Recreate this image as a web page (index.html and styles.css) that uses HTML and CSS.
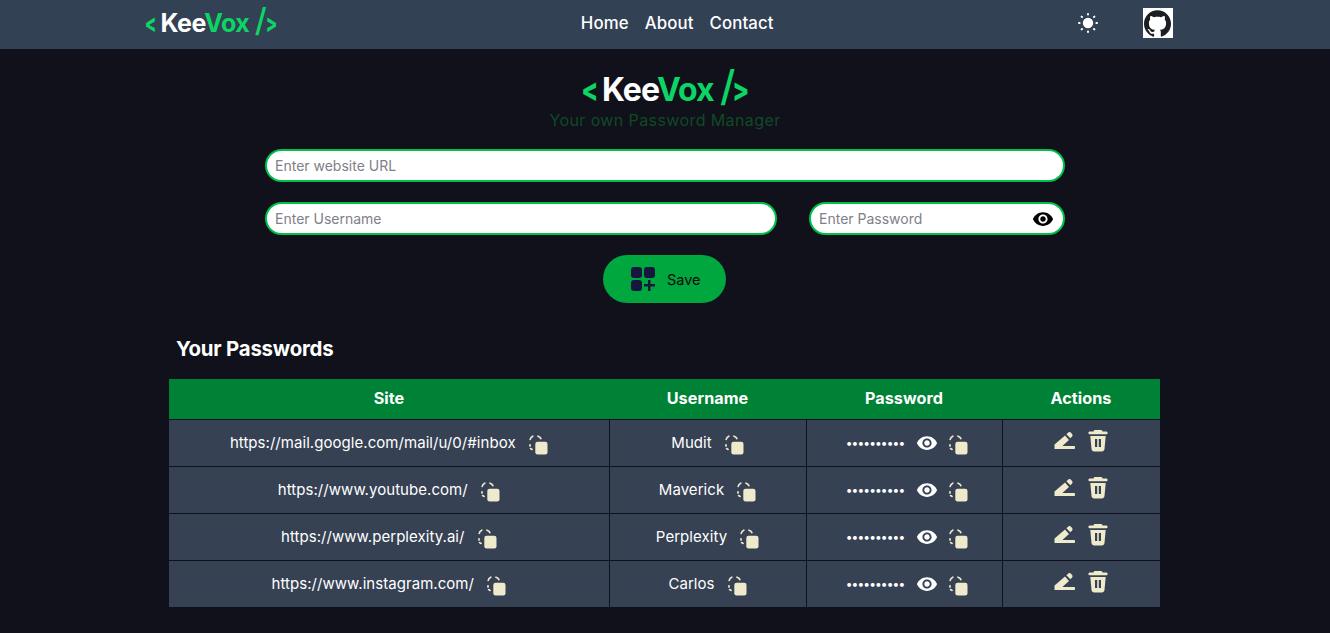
FILE: index.html
```html
<!DOCTYPE html>
<html lang="en">
<head>
<meta charset="utf-8">
<title>KeeVox</title>
<link rel="stylesheet" href="styles.css">
</head>
<body>
<svg class="defs" aria-hidden="true">
  <symbol id="eye" viewBox="0 0 24 24"><path fill-rule="evenodd" d="M12 4.500C7 4.500 2.730 7.610 1 12c1.730 4.390 6 7.500 11 7.500s9.270-3.110 11-7.500c-1.730-4.390-6-7.500-11-7.500zM12 17c-2.760 0-5-2.240-5-5s2.240-5 5-5 5 2.240 5 5-2.240 5-5 5zm0-8c-1.660 0-3 1.340-3 3s1.340 3 3 3 3-1.340 3-3-1.340-3-3-3z"/></symbol>
  <symbol id="copy" viewBox="0 0 19 20"><rect x="6.300" y="6.800" width="12.200" height="12.700" rx="2.300" fill="#eeeacb"/><path d="M1.200 4.400C1.500 3 2.400 1.800 3.800 1.200M9 1.200c1.300.4 2.300 1.200 2.900 2.400M1 9.800v1.200M1.600 13.600l1.500.8" fill="none" stroke="#eeeacb" stroke-width="1.700" stroke-linecap="round"/></symbol>
  <symbol id="edit" viewBox="0 0 22 20"><path fill="#eeeacb" d="M0.500 13.600 11 4.500l4 4.400-6.600 6H16L16.700 18H.5zM12.400 3.200l1.900-1.700c.8-.7 2-.6 2.700.2l1.100 1.300c.7.8.6 2-.2 2.700l-1.600 1.600z"/><path fill="#eeeacb" d="M8 15h12.200c.6 0 .8.4.8.9v1.200c0 .5-.3.9-.8.9H6z"/></symbol>
  <symbol id="trash" viewBox="0 0 20 22"><path fill="#eeeacb" fill-rule="evenodd" d="M7 0h6c.8 0 1.400.6 1.500 1.500H18c1 0 1.600.6 1.600 1.400s-.6 1.400-1.600 1.400H2C1 4.300.4 3.700.4 2.900S1 1.500 2 1.500h3.500C5.600.6 6.200 0 7 0zM2.300 6h15.400l-1.200 13c-.2 1.500-1.200 2.500-2.700 2.500H6.200c-1.500 0-2.500-1-2.700-2.500zM7 9v8h2.200V9zm3.800 0v8H13V9z"/></symbol>
</svg>

<nav class="nav">
  <a class="logo logo-small" href="#"><span class="green chev">&lt;</span> <span>Kee</span><span class="green">Vox</span> <span class="green slash">/</span><span class="green chev">&gt;</span></a>
  <ul class="links">
    <li><a href="#">Home</a></li>
    <li><a href="#">About</a></li>
    <li><a href="#">Contact</a></li>
  </ul>
  <div class="nav-right">
    <svg class="sun" viewBox="0 0 20 20"><circle cx="10" cy="10" r="5.200" fill="#fff"/><g stroke="#fff" stroke-width="2" stroke-linecap="round"><path d="M10 1v.6M10 18.400v.6M1 10h.6M18.400 10h.6M3.600 3.600l.4.4M16 16l.4.4M3.600 16.400l.4-.4M16 4l.4-.4"/></g></svg>
    <a class="gh" href="#"><svg viewBox="0 0 24 24"><path fill="#1b1f23" d="M12 .297c-6.630 0-12 5.373-12 12 0 5.303 3.438 9.800 8.205 11.385.6.113.82-.258.82-.577 0-.285-.01-1.040-.015-2.040-3.338.724-4.042-1.610-4.042-1.610C4.422 18.070 3.633 17.700 3.633 17.700c-1.087-.744.084-.729.084-.729 1.205.084 1.838 1.236 1.838 1.236 1.070 1.835 2.809 1.305 3.495.998.108-.776.417-1.305.76-1.605-2.665-.3-5.466-1.332-5.466-5.930 0-1.310.465-2.380 1.235-3.220-.135-.303-.54-1.523.105-3.176 0 0 1.005-.322 3.300 1.230.96-.267 1.980-.399 3-.405 1.020.006 2.040.138 3 .405 2.280-1.552 3.285-1.230 3.285-1.230.645 1.653.24 2.873.12 3.176.765.84 1.230 1.910 1.230 3.220 0 4.610-2.805 5.625-5.475 5.920.42.36.81 1.096.81 2.220 0 1.606-.015 2.896-.015 3.286 0 .315.21.69.825.57C20.565 22.092 24 17.592 24 12.297c0-6.627-5.373-12-12-12"/></svg></a>
  </div>
</nav>

<main class="main">
  <h1 class="logo logo-big"><span class="green chev">&lt;</span> <span>Kee</span><span class="green">Vox</span> <span class="green slash">/</span><span class="green chev">&gt;</span></h1>
  <p class="tagline">Your own Password Manager</p>

  <form class="form">
    <input class="field" type="text" placeholder="Enter website URL">
    <div class="form-row">
      <input class="field user" type="text" placeholder="Enter Username">
      <div class="pass">
        <input class="field" type="password" placeholder="Enter Password">
        <svg class="pass-eye"><use href="#eye"/></svg>
      </div>
    </div>
    <button class="save" type="button">
      <svg class="save-icon" viewBox="0 0 24 24" fill="#16163f"><rect x="0" y="0" width="11" height="11" rx="3"/><rect x="13" y="0" width="11" height="11" rx="3"/><rect x="0" y="13" width="11" height="11" rx="3"/><path d="M17 13h2.500v4H24v2.500h-4.500V24H17v-4.500h-4V17h4z"/></svg>
      Save
    </button>
  </form>

  <section class="list">
    <h2 class="list-title">Your Passwords</h2>
    <table class="table">
      <colgroup><col class="c1"><col class="c2"><col class="c3"><col class="c4"></colgroup>
      <thead><tr><th>Site</th><th>Username</th><th>Password</th><th>Actions</th></tr></thead>
      <tbody>
        <tr>
          <td><div class="cell"><span>https://mail.google.com/mail/u/0/#inbox</span><svg class="copy"><use href="#copy"/></svg></div></td>
          <td><div class="cell"><span>Mudit</span><svg class="copy"><use href="#copy"/></svg></div></td>
          <td><div class="cell pw"><span class="dots">••••••••••</span><svg class="eye"><use href="#eye"/></svg><svg class="copy"><use href="#copy"/></svg></div></td>
          <td><div class="cell acts"><svg class="edit"><use href="#edit"/></svg><svg class="trash"><use href="#trash"/></svg></div></td>
        </tr>
        <tr>
          <td><div class="cell"><span>https://www.youtube.com/</span><svg class="copy"><use href="#copy"/></svg></div></td>
          <td><div class="cell"><span>Maverick</span><svg class="copy"><use href="#copy"/></svg></div></td>
          <td><div class="cell pw"><span class="dots">••••••••••</span><svg class="eye"><use href="#eye"/></svg><svg class="copy"><use href="#copy"/></svg></div></td>
          <td><div class="cell acts"><svg class="edit"><use href="#edit"/></svg><svg class="trash"><use href="#trash"/></svg></div></td>
        </tr>
        <tr>
          <td><div class="cell"><span>https://www.perplexity.ai/</span><svg class="copy"><use href="#copy"/></svg></div></td>
          <td><div class="cell"><span>Perplexity</span><svg class="copy"><use href="#copy"/></svg></div></td>
          <td><div class="cell pw"><span class="dots">••••••••••</span><svg class="eye"><use href="#eye"/></svg><svg class="copy"><use href="#copy"/></svg></div></td>
          <td><div class="cell acts"><svg class="edit"><use href="#edit"/></svg><svg class="trash"><use href="#trash"/></svg></div></td>
        </tr>
        <tr>
          <td><div class="cell"><span>https://www.instagram.com/</span><svg class="copy"><use href="#copy"/></svg></div></td>
          <td><div class="cell"><span>Carlos</span><svg class="copy"><use href="#copy"/></svg></div></td>
          <td><div class="cell pw"><span class="dots">••••••••••</span><svg class="eye"><use href="#eye"/></svg><svg class="copy"><use href="#copy"/></svg></div></td>
          <td><div class="cell acts"><svg class="edit"><use href="#edit"/></svg><svg class="trash"><use href="#trash"/></svg></div></td>
        </tr>
      </tbody>
    </table>
  </section>
</main>
</body>
</html>
```

FILE: styles.css
```css
* { box-sizing: border-box; }
html, body { margin: 0; height: 633px; overflow: hidden; }
body {
  background: #10111a;
  color: #fff;
  font-family: "Inter", "Open Sans", sans-serif;
}
a { color: inherit; text-decoration: none; }
.defs { display: none; }
.green { color: #0bd665; }

.nav {
  height: 49px;
  background: #334155;
  display: flex;
  align-items: center;
  justify-content: space-between;
  padding: 0 157px 3px 145px;
}
.logo { font-weight: 700; white-space: nowrap; margin: 0; }
.logo-small { font-size: 25px; letter-spacing: -0.5px; line-height: 46px; }
.logo-big { font-size: 32px; letter-spacing: -1px; line-height: 40px; text-align: center; }
.chev { display: inline-block; transform: scaleX(.68); margin: 0 -.13em; font-weight: 800; }
.logo-big .chev { transform: scaleX(.78); }
.slash { font-weight: 500; font-size: 1.3em; line-height: 0; }
.links { display: flex; gap: 16px; list-style: none; margin: 0; padding: 0; font-size: 16.800px; font-weight: 500; letter-spacing: .12px; }
.nav-right { display: flex; align-items: center; gap: 45px; }
.sun { width: 20px; height: 20px; display: block; }
.gh { width: 30px; height: 30px; background: #fff; display: flex; align-items: center; justify-content: center; }
.gh svg { width: 27px; height: 27px; display: block; }

.main { display: flex; flex-direction: column; align-items: center; padding-top: 21px; }
.tagline { margin: 0; color: #0f4a25; font-size: 16px; line-height: 20px; height: 19px; letter-spacing: 0.4px; }

.form { width: 800px; margin-top: 20px; display: flex; flex-direction: column; gap: 20px; align-items: center; }
.field {
  width: 100%;
  height: 33px;
  border: 2px solid #00c04b;
  border-radius: 17px;
  background: #fff;
  padding: 0 8px;
  font: 14px "Inter", sans-serif;
  outline: none;
}
.field::placeholder { color: #80808a; }
.form-row { width: 100%; display: flex; justify-content: space-between; }
.user { width: 512px; }
.pass { position: relative; width: 256px; }
.pass-eye { position: absolute; right: 11px; top: 6px; width: 22px; height: 22px; fill: #000; }
.save {
  width: 123px;
  height: 48px;
  margin-right: 1px;
  border: 0;
  border-radius: 24px;
  background: #00a63e;
  color: #0a0a0a;
  display: flex;
  align-items: center;
  gap: 12px;
  padding: 0 0 0 28px;
  font: 14.500px "Inter", sans-serif;
}
.save-icon { width: 24px; height: 24px; flex: none; }

.list { width: 992px; margin-top: 30px; }
.list-title { margin: 0 0 14px 7px; font-size: 20.400px; line-height: 32px; font-weight: 700; letter-spacing: -0.2px; }
.table { width: 991px; border-collapse: collapse; table-layout: fixed; font-size: 15px; letter-spacing: .05px; }
.c1 { width: 440px; } .c2 { width: 197px; } .c3 { width: 196px; } .c4 { width: 158px; }
th { height: 40px; background: #008236; font-size: 16.200px; font-weight: 700; padding: 0 0 1px; }
td { height: 47px; padding: 0; background: #364153; border: 1px solid #10111a; }
tr td:first-child { border-left: 0; }
tr td:last-child { border-right: 0; }
tbody tr:last-child td { border-bottom: 0; }
.cell { display: flex; align-items: center; justify-content: center; gap: 13px; }
.copy { width: 19px; height: 20px; margin-top: 5px; flex: none; }
.dots { font-size: 12px; letter-spacing: -0.9px; }
.eye { width: 22px; height: 22px; fill: #fff; }
.pw { padding-left: 6px; gap: 12px; }
.pw .copy { margin-left: -1px; }
.edit { width: 22px; height: 20px; }
.trash { width: 20px; height: 22px; }
.acts { gap: 12px; margin-top: -3px; }
```
